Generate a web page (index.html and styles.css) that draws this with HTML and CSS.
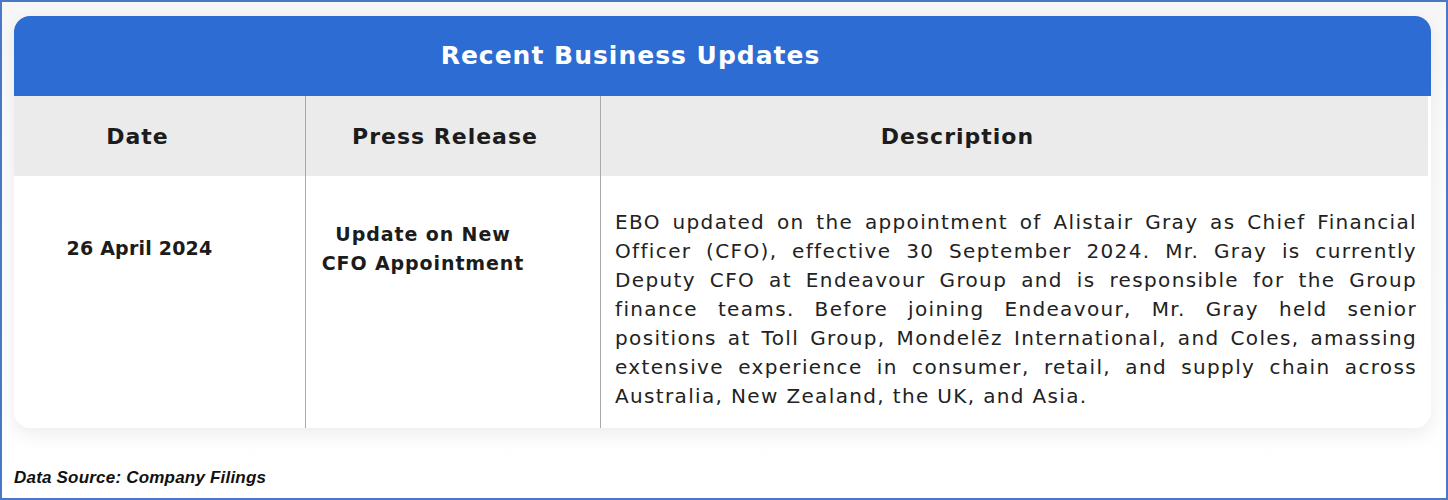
FILE: index.html
```html
<!DOCTYPE html>
<html lang="en">
<head>
<meta charset="utf-8">
<title>Recent Business Updates</title>
<link rel="stylesheet" href="styles.css">
</head>
<body>
<div class="frame">
  <div class="card">
    <div class="title">Recent Business Updates</div>
    <div class="table">
      <div class="cell head c1">Date</div>
      <div class="cell head c2">Press Release</div>
      <div class="cell head c3">Description</div>
      <div class="cell body c1"><span class="date">26 April 2024</span></div>
      <div class="cell body c2"><span class="release">Update on New<br>CFO Appointment</span></div>
      <div class="cell body c3">
        <p class="desc">
          <span class="ln">EBO updated on the appointment of Alistair Gray as Chief Financial</span>
          <span class="ln">Officer (CFO), effective 30 September 2024. Mr. Gray is currently</span>
          <span class="ln">Deputy CFO at Endeavour Group and is responsible for the Group</span>
          <span class="ln">finance teams. Before joining Endeavour, Mr. Gray held senior</span>
          <span class="ln">positions at Toll Group, Mondelēz International, and Coles, amassing</span>
          <span class="ln">extensive experience in consumer, retail, and supply chain across</span>
          <span class="ln last">Australia, New Zealand, the UK, and Asia.</span>
        </p>
      </div>
    </div>
  </div>
  <div class="source">Data Source: Company Filings</div>
</div>
</body>
</html>
```

FILE: styles.css
```css
* { box-sizing: border-box; }
html, body { margin: 0; padding: 0; }
body { background: #ffffff; }

.frame {
  width: 1448px;
  height: 500px;
  border: 2px solid #4a78c9;
  background: linear-gradient(#f6f6f6, #fbfbfb 30%, #ffffff);
  padding: 14px 15px 0 12px;
  font-family: "DejaVu Sans", sans-serif;
  color: #1c1c1c;
}

.card {
  width: 1417px;
  height: 412px;
  background: #ffffff;
  border-radius: 16px;
  box-shadow: 0 6px 18px rgba(0, 0, 0, 0.07);
  overflow: hidden;
  display: flex;
  flex-direction: column;
}

.title {
  height: 80px;
  background: #2d6cd3;
  color: #ffffff;
  font-weight: bold;
  font-size: 25px;
  letter-spacing: 1px;
  display: flex;
  align-items: center;
  justify-content: center;
  padding-right: 184px;
  padding-bottom: 2px;
}

.table {
  flex: 1;
  display: grid;
  grid-template-columns: 291px 295px 1fr;
  grid-template-rows: 80px 1fr;
}

.cell.c2, .cell.c3 { border-left: 1px solid #a9a9a9; }

.head {
  background: #ebebeb;
  font-weight: bold;
  font-size: 22px;
  letter-spacing: 1px;
  display: flex;
  align-items: center;
  justify-content: center;
  padding-top: 1px;
}
.head.c1 { padding-right: 44px; }
.head.c2 { padding-right: 16px; }
.head.c3 { padding-right: 114px; margin-right: 3px; }

.body { font-size: 19px; line-height: 29px; }
.body.c1 {
  padding-top: 58px;
  padding-right: 40px;
  text-align: center;
  font-weight: bold;
  letter-spacing: 0.2px;
}
.body.c2 {
  padding-top: 44px;
  padding-right: 60px;
  text-align: center;
  font-weight: bold;
  letter-spacing: 0.9px;
}
.body.c3 { padding: 32px 14px 0 14px; }
.desc {
  margin: 0;
  color: #222222;
  font-size: 20px;
  letter-spacing: 1.35px;
}
.ln {
  display: block;
  text-align: justify;
  text-align-last: justify;
  white-space: nowrap;
}
.ln.last { text-align-last: left; }

.source {
  margin-top: 40px;
  font-family: "Liberation Sans", Arial, sans-serif;
  font-weight: bold;
  font-style: italic;
  font-size: 17px;
  letter-spacing: 0.2px;
  color: #111111;
}
```
